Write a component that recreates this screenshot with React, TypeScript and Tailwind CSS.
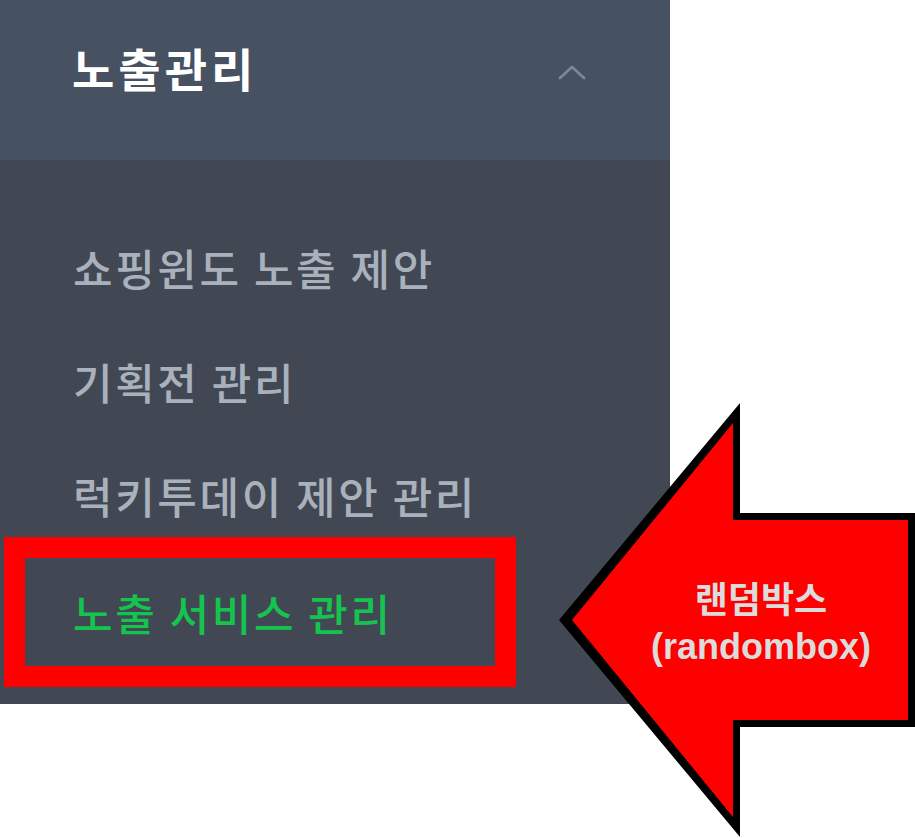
import React from 'react';

const items = ['쇼핑윈도 노출 제안', '기획전 관리', '럭키투데이 제안 관리'];

function Arrow() {
  return (
    <div className="absolute left-[559px] top-[403px] w-[356px] h-[435px]">
      <svg width="356" height="435" viewBox="559 403 356 435" className="absolute inset-0">
        <polygon points="559,620 740,403 740,513 915,513 915,727 740,727 740,837" fill="#000" />
        <polygon points="572,620 733,423 733,520 908,520 908,720 733,720 733,817" fill="#ff0000" />
      </svg>
      <div className="absolute left-[52px] top-[170px] w-[300px] text-center font-bold text-[#dcdcdc] leading-[49px]">
        <div className="text-[36px] [font-family:'Noto_Sans_CJK_KR',sans-serif]">랜덤박스</div>
        <div className="text-[36px] [font-family:'Liberation_Sans',Arial,sans-serif]">(randombox)</div>
      </div>
    </div>
  );
}

export default function App() {
  return (
    <div className="relative w-[915px] h-[838px] bg-white overflow-hidden [font-family:'Noto_Sans_CJK_KR',sans-serif]">
      <aside className="w-[670px] bg-[#414854] pb-[17px]">
        <div className="h-[160px] bg-[#465162] flex items-center justify-between pl-[72px] pr-[84px] pb-[26px]">
          <span className="text-[46px] font-bold text-white leading-none tracking-[4px]">노출관리</span>
          <svg width="28" height="16" viewBox="0 0 28 16" fill="none" className="mt-[10px]">
            <polyline points="2,14 14,3 26,14" stroke="#7b8594" strokeWidth="3" strokeLinecap="round" strokeLinejoin="round" />
          </svg>
        </div>
        <ul className="pt-[50px]">
          {items.map((label) => (
            <li key={label} className="h-[114px] flex items-center pl-[73px] text-[43px] font-medium text-[#a9b1bd] leading-none tracking-[2.6px]">
              {label}
            </li>
          ))}
          <li className="-mt-[15px] ml-[4px] w-[512px] h-[150px] border-[21px] border-[#ff0000] flex items-center pl-[48px] text-[43px] font-medium text-[#14c44e] leading-none tracking-[2.6px]">
            노출 서비스 관리
          </li>
        </ul>
      </aside>
      <Arrow />
    </div>
  );
}
